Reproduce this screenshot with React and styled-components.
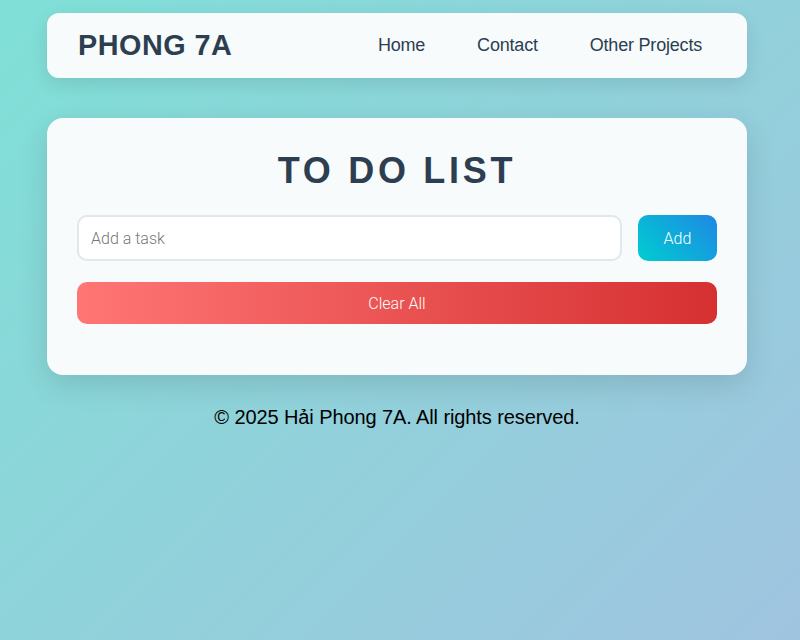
import React from "react";
import styled, { createGlobalStyle } from "styled-components";

const GlobalStyle = createGlobalStyle`
  html, body {
    margin: 0;
    padding: 0;
    min-height: 100%;
  }
  body {
    font-family: "Liberation Sans", Arial, sans-serif;
    background: linear-gradient(135deg, #7fe0d7 0%, #8fd3da 45%, #a0c4e0 100%);
    min-height: 640px;
  }
`;

const Page = styled.div`
  width: 700px;
  margin: 0 calc(50% - 347px) 0 calc(50% - 353px);
  padding-top: 13px;
`;

const Header = styled.header`
  height: 65px;
  box-sizing: border-box;
  background-color: #f7fbfc;
  border-radius: 12px;
  box-shadow: 0 6px 18px rgba(0, 0, 0, 0.1);
  display: flex;
  align-items: center;
  justify-content: space-between;
  padding: 0 30px 0 31px;
`;

const Logo = styled.div`
  font-size: 28.8px;
  font-weight: bold;
  color: #2c3e50;
  letter-spacing: 0.5px;
`;

const Nav = styled.nav`
  display: flex;
  gap: 22px;
`;

const NavLink = styled.a`
  color: #2c3e50;
  font-size: 18px;
  letter-spacing: -0.2px;
  text-decoration: none;
  padding: 8px 15px;
`;

const Card = styled.main`
  margin-top: 40px;
  background-color: #f7fbfc;
  border-radius: 16px;
  box-shadow: 0 10px 30px rgba(0, 0, 0, 0.12);
  padding: 30px 30px 51px;
`;

const Title = styled.h1`
  margin: 0 0 21px;
  text-align: center;
  font-size: 36px;
  font-weight: bold;
  letter-spacing: 3.7px;
  color: #2c3e50;
  line-height: 46px;
`;

const InputRow = styled.div`
  display: flex;
  gap: 16px;
`;

const TaskInput = styled.input`
  flex: 1;
  height: 46px;
  box-sizing: border-box;
  border: 2px solid #e1e7eb;
  border-radius: 10px;
  padding: 0 12px;
  font-family: Roboto, sans-serif;
  font-weight: 300;
  font-size: 16px;
  background: #fff;
  outline: none;
  &::placeholder {
    color: #777;
  }
`;

const Button = styled.button`
  border: none;
  border-radius: 10px;
  color: #fff;
  font-family: Roboto, sans-serif;
  font-weight: 300;
  font-size: 16px;
  cursor: pointer;
  height: ${(p) => p.$h}px;
  width: ${(p) => (p.$full ? "100%" : "79px")};
  background: ${(p) => p.$bg};
`;

const ClearRow = styled.div`
  margin-top: 21px;
`;

const Footer = styled.footer`
  text-align: center;
  font-size: 20px;
  letter-spacing: -0.1px;
  color: #000;
  margin-top: 31px;
`;

export default function App() {
  return (
    <>
      <GlobalStyle />
      <Page>
        <Header>
          <Logo>PHONG 7A</Logo>
          <Nav>
            <NavLink href="#">Home</NavLink>
            <NavLink href="#">Contact</NavLink>
            <NavLink href="#">Other Projects</NavLink>
          </Nav>
        </Header>
        <Card>
          <Title>TO DO LIST</Title>
          <InputRow>
            <TaskInput placeholder="Add a task" />
            <Button $h={46} $bg="linear-gradient(45deg, #00cdd0, #1e88e5)">
              Add
            </Button>
          </InputRow>
          <ClearRow>
            <Button $full $h={42} $bg="linear-gradient(90deg, #ff7675, #d63031)">
              Clear All
            </Button>
          </ClearRow>
        </Card>
        <Footer>© 2025 Hải Phong 7A. All rights reserved.</Footer>
      </Page>
    </>
  );
}
